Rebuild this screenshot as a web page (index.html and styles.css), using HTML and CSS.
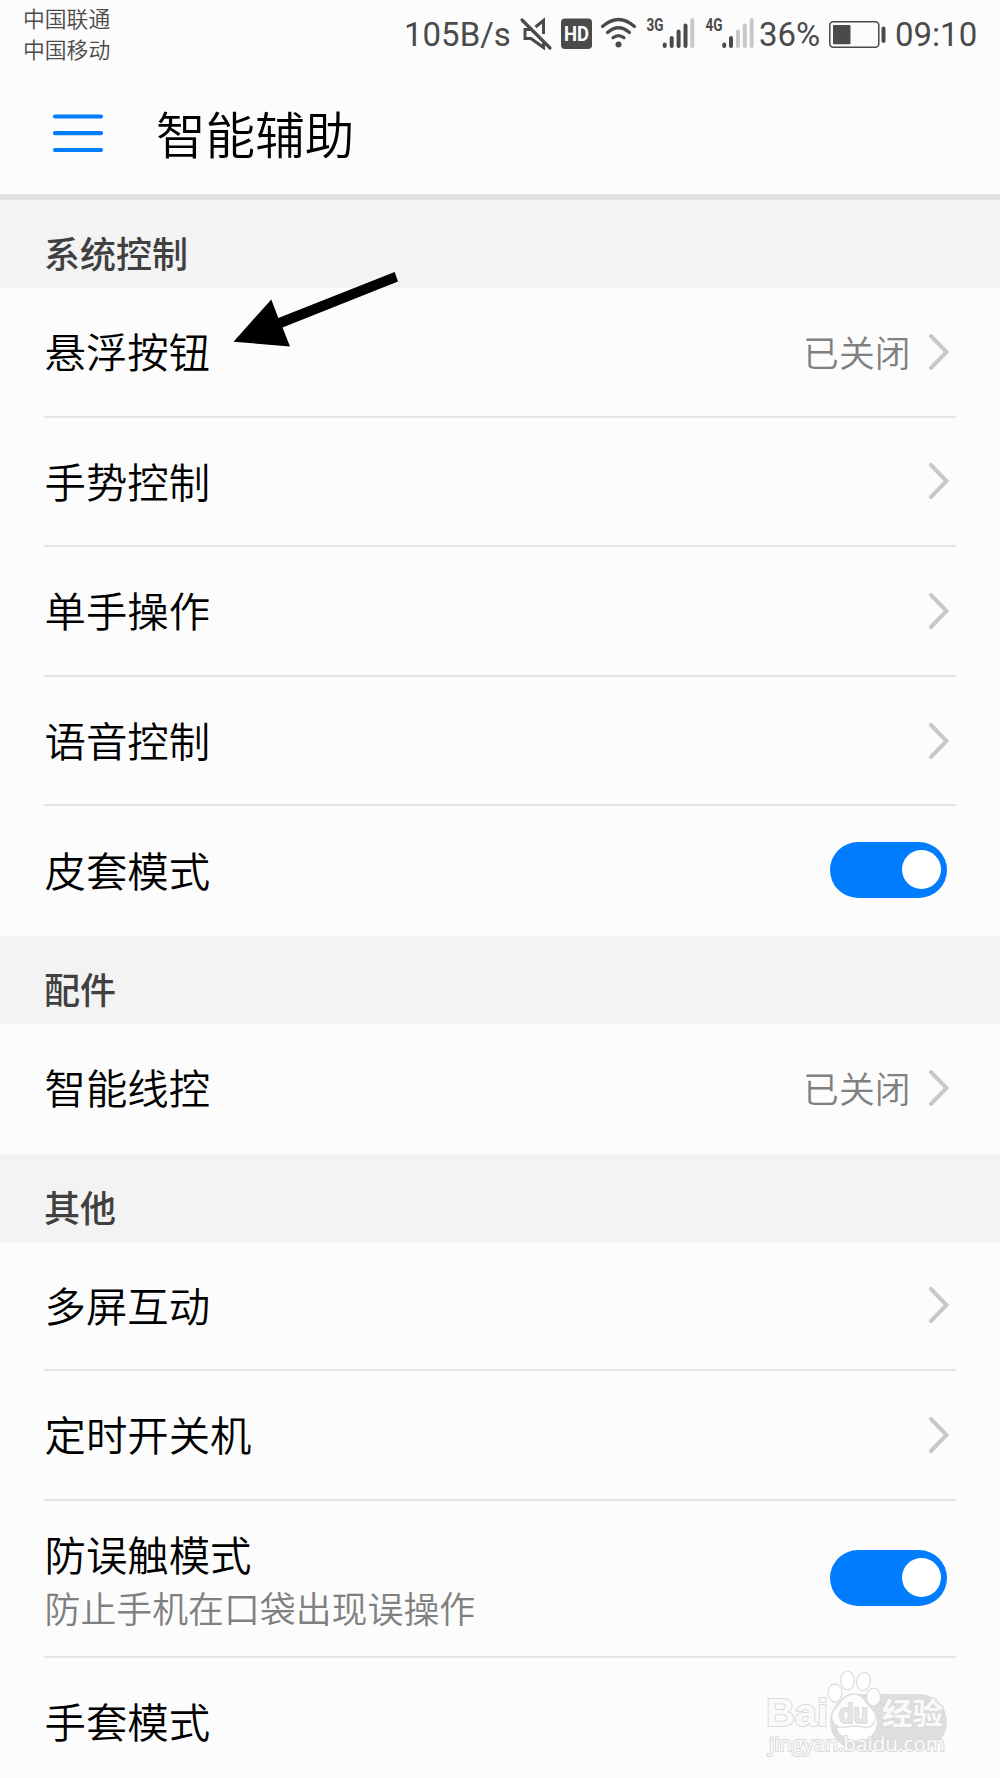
FILE: index.html
```html
<!DOCTYPE html>
<html lang="zh-CN">
<head>
    <meta charset="UTF-8">
    <meta name="viewport" content="width=device-width, initial-scale=1.0">
    <title>智能辅助</title>
    <link rel="stylesheet" href="styles.css">
</head>
<body>
    <div class="statusbar">
        <div class="carrier">
            <p>中国联通</p>
            <p>中国移动</p>
        </div>
        <div class="status">
            <span class="speed">105B/s</span>
            <!-- 静音 -->
            <svg width="40" height="70" viewBox="516 0 40 70" fill="none" stroke="#4a4a4a">
                <path d="M531 29.500H525V38.500H531L543.500 47.500V43M535.500 27L543.500 20.500V34" stroke-width="3"/>
                <path d="M522 20L550 48" stroke-width="3.200" stroke-linecap="round"/>
            </svg>
            <!-- HD -->
            <svg width="40" height="70" viewBox="556 0 40 70">
                <rect x="561" y="18.500" width="31" height="30.500" rx="4" fill="#4a4a4a"/>
                <text class="hd" x="564" y="41" textLength="25" lengthAdjust="spacingAndGlyphs">HD</text>
            </svg>
            <!-- wifi -->
            <svg width="46" height="70" viewBox="596 0 46 70" fill="none" stroke="#4a4a4a" stroke-width="3.200" stroke-linecap="round">
                <path d="M602.500 26.500Q618.500 12.500 634.500 26.500M607.500 32.500Q618.500 23 629.500 32.500M613 37.800Q618.500 33.500 624 37.800"/>
                <circle cx="618.500" cy="44.500" r="3" fill="#4a4a4a" stroke="none"/>
            </svg>
            <!-- 信号 -->
            <svg width="58" height="70" viewBox="642 0 58 70" stroke="#4a4a4a" stroke-width="4" stroke-linecap="round">
                <text class="net" x="646.500" y="31" textLength="17" lengthAdjust="spacingAndGlyphs">3G</text>
                <path d="M664.700 44.500V46M671.700 38V46M678.600 31.500V46M685.500 25.500V46"/>
                <path d="M692.300 20V46" stroke="#c8c8c8"/>
            </svg>
            <svg width="58" height="70" viewBox="700 0 58 70" stroke="#4a4a4a" stroke-width="4" stroke-linecap="round">
                <text class="net" x="705.500" y="31" textLength="17" lengthAdjust="spacingAndGlyphs">4G</text>
                <path d="M724.200 44.500V46M731 38V46"/>
                <path d="M738 31.500V46M744.800 25.500V46M751.700 20V46" stroke="#c8c8c8"/>
            </svg>
            <span class="percent">36%</span>
            <!-- 电池 -->
            <svg width="67" height="70" viewBox="826 0 67 70">
                <rect x="829.800" y="21.800" width="49" height="25.500" rx="3.500" fill="none" stroke="#4a4a4a" stroke-width="1.500"/>
                <rect x="833" y="25" width="17.500" height="19.300" rx="1" fill="#4a4a4a"/>
                <path d="M883.500 28.500V41" stroke="#4a4a4a" stroke-width="4" stroke-linecap="round"/>
            </svg>
            <span class="time">09:10</span>
        </div>
    </div>

    <div class="header">
        <svg class="menu" width="52" height="40" viewBox="0 0 52 40">
            <path d="M3 3.500H49M3 20.200H49M3 37H49" stroke="#007dff" stroke-width="4.200" stroke-linecap="round"/>
        </svg>
        <h1>智能辅助</h1>
    </div>

    <h2>系统控制</h2>
    <ul>
        <li>
            <span>悬浮按钮</span>
            <span class="value">已关闭</span>
            <svg class="more" viewBox="0 0 20 36"><path d="M2 2L17.500 18L2 34"/></svg>
        </li>
        <li>
            <span>手势控制</span>
            <svg class="more" viewBox="0 0 20 36"><path d="M2 2L17.500 18L2 34"/></svg>
        </li>
        <li>
            <span>单手操作</span>
            <svg class="more" viewBox="0 0 20 36"><path d="M2 2L17.500 18L2 34"/></svg>
        </li>
        <li>
            <span>语音控制</span>
            <svg class="more" viewBox="0 0 20 36"><path d="M2 2L17.500 18L2 34"/></svg>
        </li>
        <li>
            <span>皮套模式</span>
            <i class="switch on"></i>
        </li>
    </ul>

    <h2>配件</h2>
    <ul>
        <li>
            <span>智能线控</span>
            <span class="value">已关闭</span>
            <svg class="more" viewBox="0 0 20 36"><path d="M2 2L17.500 18L2 34"/></svg>
        </li>
    </ul>

    <h2>其他</h2>
    <ul>
        <li>
            <span>多屏互动</span>
            <svg class="more" viewBox="0 0 20 36"><path d="M2 2L17.500 18L2 34"/></svg>
        </li>
        <li>
            <span>定时开关机</span>
            <svg class="more" viewBox="0 0 20 36"><path d="M2 2L17.500 18L2 34"/></svg>
        </li>
        <li class="double">
            <div>
                <p>防误触模式</p>
                <p class="desc">防止手机在口袋出现误操作</p>
            </div>
            <i class="switch on"></i>
        </li>
        <li>
            <span>手套模式</span>
            <i class="switch"></i>
        </li>
    </ul>

    <!-- 箭头标注 -->
    <svg class="arrow" width="170" height="80" viewBox="230 270 170 80">
        <path d="M233.500 341.700L271.300 299.500L278.300 318L394.700 272L398 281.500L282.500 327.500L290 346.500Z"/>
    </svg>

    <!-- 水印 -->
    <svg class="watermark" width="190" height="90" viewBox="762 1668 190 90">
        <g fill="#fff" fill-opacity=".9" stroke="#dedede" stroke-width="1.300">
            <ellipse cx="835" cy="1693" rx="7" ry="9"/>
            <ellipse cx="847.500" cy="1680.500" rx="6.800" ry="9.300"/>
            <ellipse cx="863.500" cy="1681.500" rx="6.800" ry="9" transform="rotate(12 863.500 1681.500)"/>
            <ellipse cx="873.500" cy="1697" rx="7" ry="8.800"/>
            <path d="M854 1694C864 1694 865 1704 872 1709C880 1718 874 1729 863 1727Q854 1725 846 1727C834 1729 828 1719 834 1710C841 1703 843 1694 854 1694Z"/>
        </g>
        <path d="M837 1728H871C867 1743 841 1743 837 1728Z" fill="#fff"/>
        <g class="mark">
            <text class="bai" x="766" y="1726" textLength="62" lengthAdjust="spacingAndGlyphs">Bai</text>
            <text class="du" x="839" y="1723" textLength="29" lengthAdjust="spacingAndGlyphs">du</text>
            <text class="jy" x="882" y="1724" textLength="61" lengthAdjust="spacingAndGlyphs">经验</text>
            <text class="site" x="769" y="1751" textLength="176" lengthAdjust="spacingAndGlyphs">jingyan.baidu.com</text>
        </g>
    </svg>
</body>
</html>
```
FILE: styles.css
```css
*{
    margin:0;
    padding:0;
    box-sizing:border-box;
}
body{
    position:relative;
    width:1000px;
    height:1778px;
    overflow:hidden;
    background:#fcfcfc;
    color:#000;
    font-family:Roboto,"Noto Sans CJK SC",sans-serif;
    font-weight:350;
}
svg{display:block;flex:none;}

/* 状态栏 */
.statusbar{
    display:flex;
    justify-content:space-between;
    height:70px;
    padding:5px 20px 0 23px;
    color:#4a4a4a;
}
.carrier{
    font-size:21.8px;
    line-height:30.5px;
}
.status{
    display:flex;
    height:70px;
    margin-top:-5px;
    font-size:33px;
    font-weight:400;
    line-height:70px;
}
.speed{width:113px;padding-left:1px;}
.percent{width:68px;padding-left:1px;}
.time{width:87px;padding-left:2px;}
.hd{
    font:700 20px Roboto,sans-serif;
    fill:#fff;
    stroke:none;
}
.net{
    font:700 18px Roboto,sans-serif;
    fill:#4a4a4a;
    stroke:none;
}

/* 标题栏 */
.header{
    display:flex;
    align-items:center;
    height:130px;
    padding:0 52px;
    border-bottom:6px solid #e1e1e1;
}
.header .menu{margin-top:2px;}
.header h1{
    margin-left:52px;
    padding-top:9px;
    font-size:49.6px;
    font-weight:350;
    line-height:60px;
}

h2{
    height:88px;
    padding:21px 44px 0;
    background:#f3f3f3;
    color:#404040;
    font-size:36px;
    font-weight:500;
    line-height:70px;
}

/* 设置列表 */
ul{list-style:none;}
li{
    display:flex;
    align-items:center;
    height:129.6px;
    margin:0 44px;
    border-bottom:2px solid #e4e4e4;
    font-size:41.4px;
    line-height:50px;
}
li:last-child{border-bottom-color:transparent;}
li > :first-child{
    flex:1;
    padding:5px 0 0 .5px;
}
.double{height:157.2px;}
.double > :first-child{padding-top:12px;}
.desc{
    padding-top:4px;
    color:#808080;
    font-size:35.9px;
    line-height:50px;
}
.value{
    margin-right:18.5px;
    padding-top:6px;
    color:#808080;
    font-size:35.8px;
}
.more{
    width:20px;
    height:36px;
    margin-right:7px;
    fill:none;
    stroke:#c8c8c8;
    stroke-width:4;
    stroke-linecap:round;
}
.switch{
    width:117px;
    height:56px;
    margin:0 8.6px 0 0;
    padding:8px;
    border-radius:28px;
    background:#dedede;
}
.switch::before{
    content:"";
    display:block;
    width:39px;
    height:39px;
    border-radius:50%;
    background:#fff;
}
.switch.on{background:#007dff;}
.switch.on::before{margin-left:64px;}

.arrow{
    position:absolute;
    left:230px;
    top:270px;
}
.watermark{
    position:absolute;
    left:762px;
    top:1668px;
}
.mark{
    fill:#fafafa;
    stroke:#dadada;
    stroke-width:2px;
    paint-order:stroke;
}
.bai{font:700 39px "Liberation Sans",sans-serif;}
.du{
    font:700 27px "Liberation Sans",sans-serif;
    fill:#e6e6e6;
}
.jy{font:700 30px "Noto Sans CJK SC",sans-serif;}
.site{font:400 20px "Open Sans",sans-serif;}
```
